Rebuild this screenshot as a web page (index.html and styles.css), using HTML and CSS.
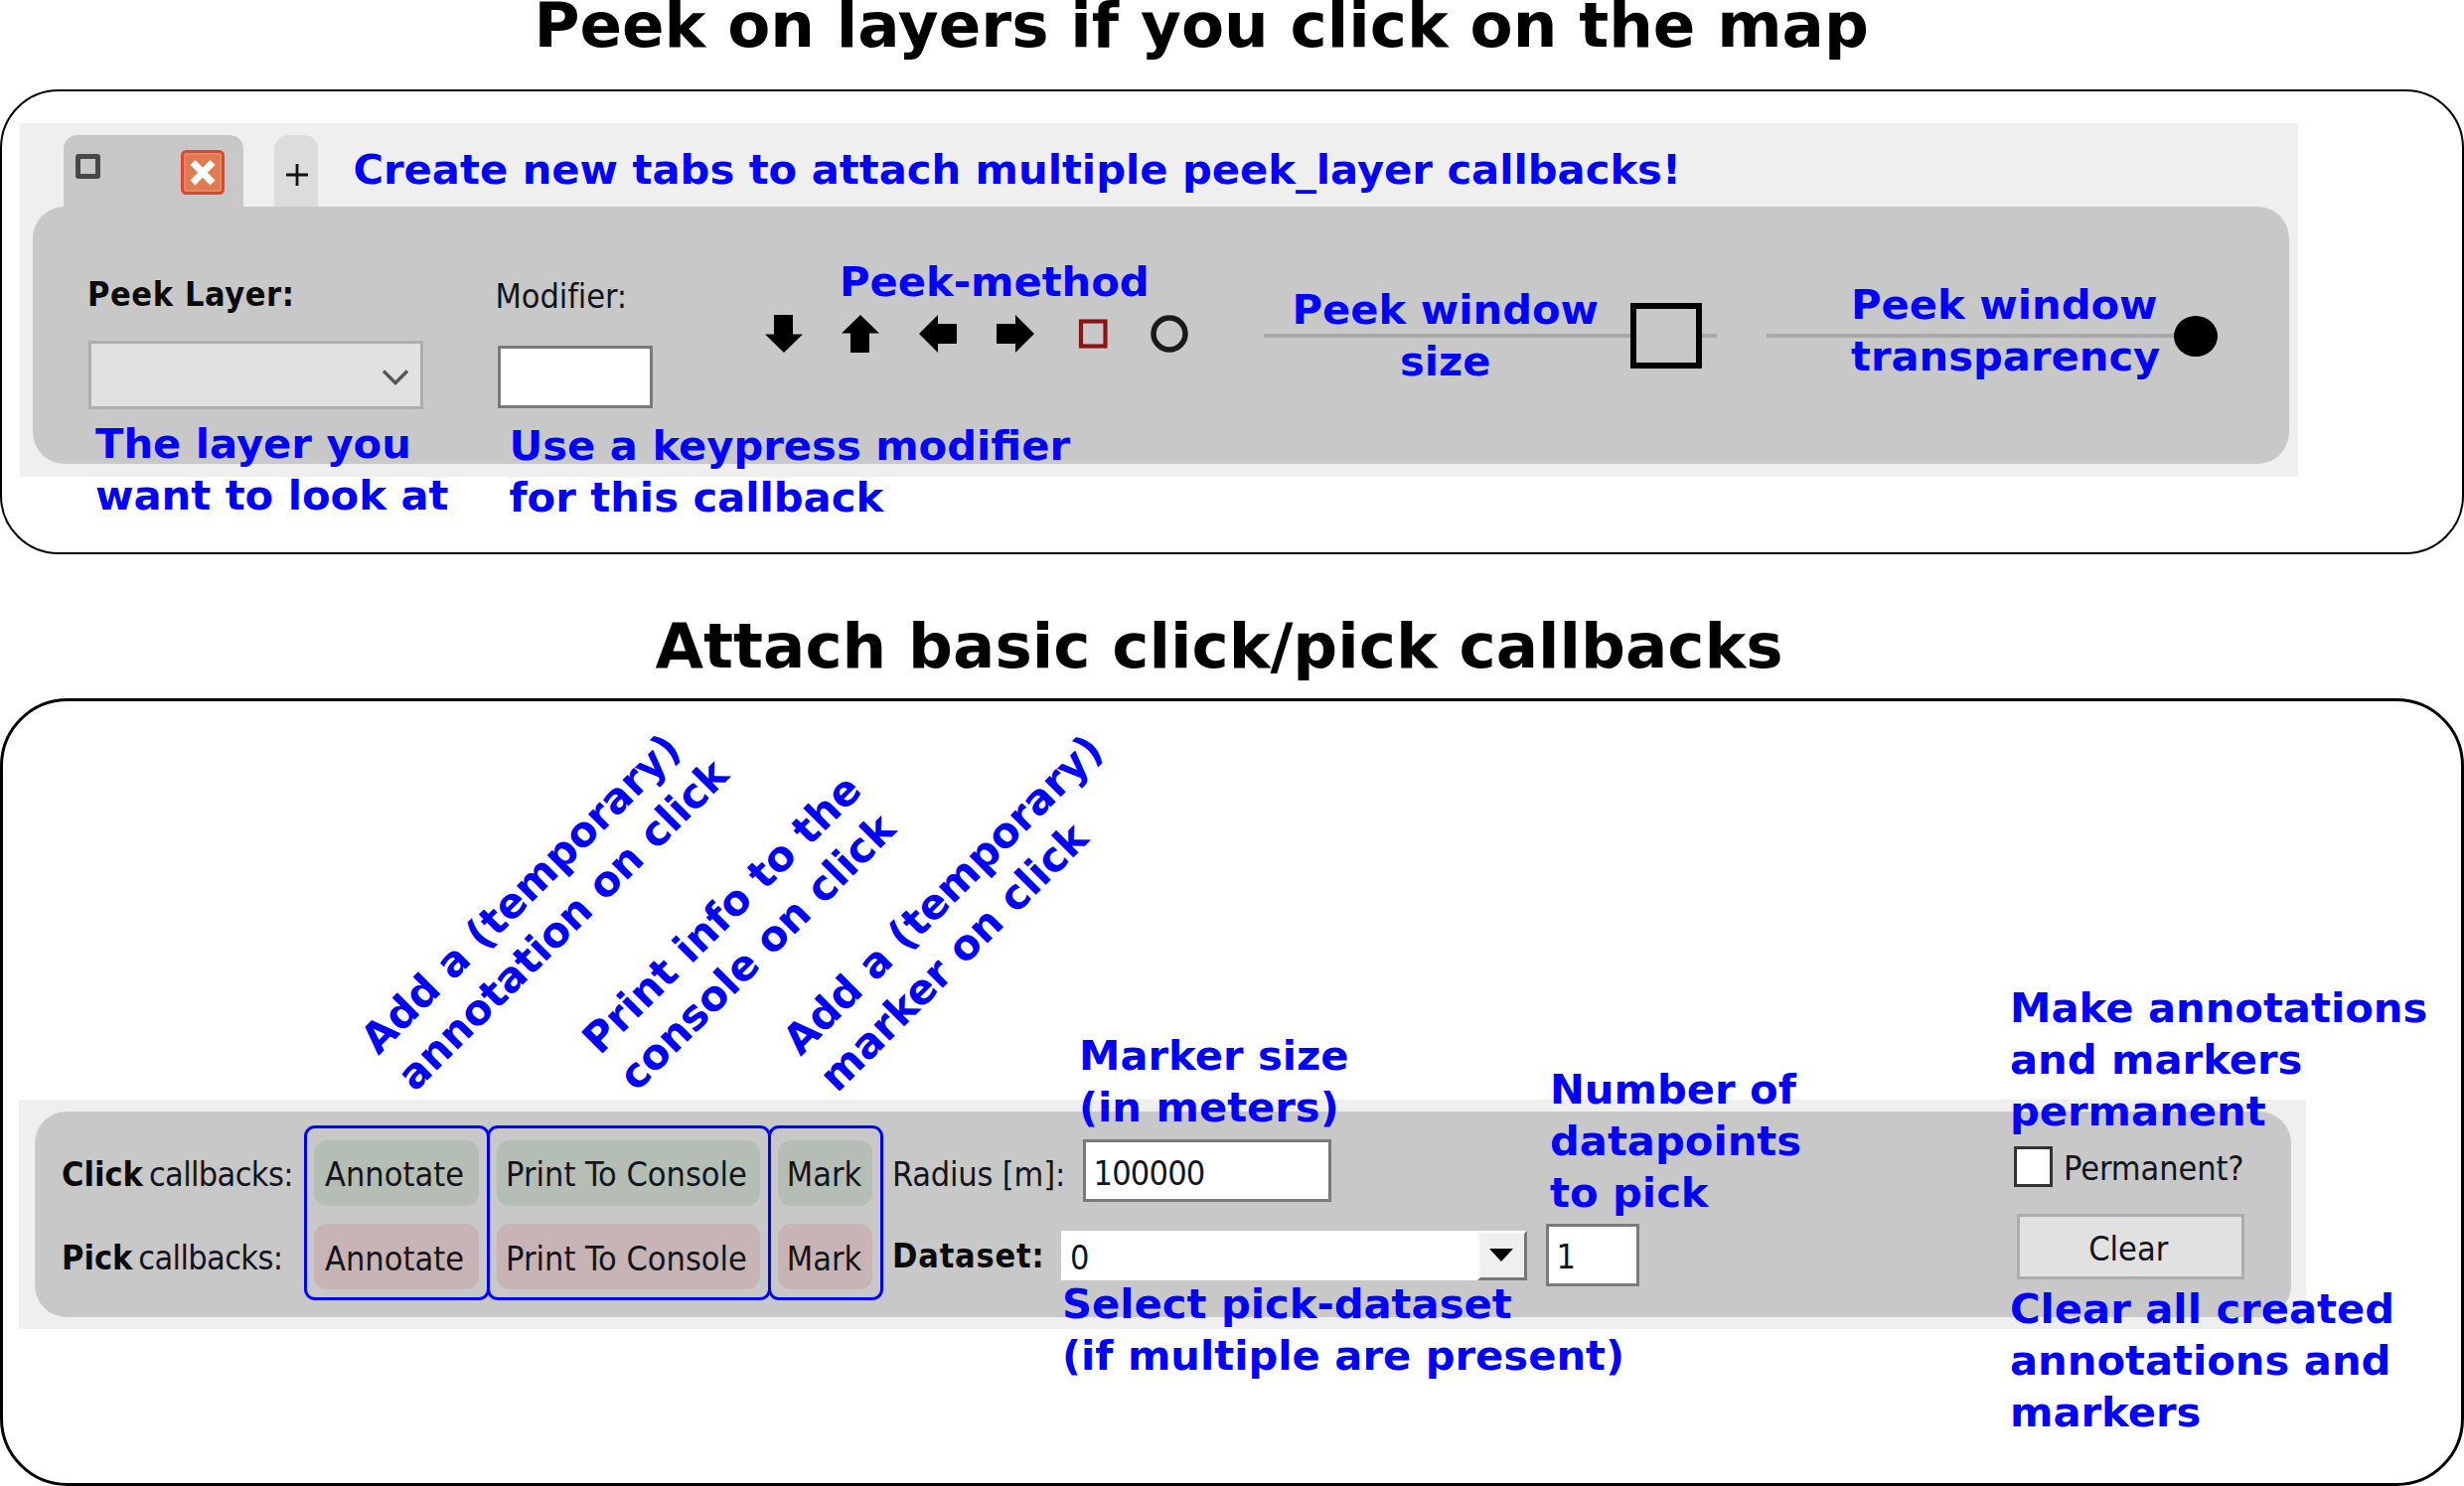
FILE: index.html
```html
<!DOCTYPE html>
<html lang="en">
<head>
<meta charset="utf-8">
<title>Peek and click callbacks</title>
<link rel="stylesheet" href="styles.css">
</head>
<body>
<main class="page">
  <h1 class="title title-peek">Peek on layers if you click on the map</h1>
  <section class="card card-peek">
    <div class="shot shot-peek">
      <div class="tabs">
        <div class="tab">
          <span class="tab-icon"></span>
          <svg class="close" viewBox="0 0 44 45"><rect x="1.5" y="1.5" width="41" height="42" rx="4" fill="#e07a50" stroke="#dc4632" stroke-width="3"/><rect x="4" y="4" width="36" height="37" rx="2" fill="none" stroke="#e88e68" stroke-width="1.5"/><path d="M12 12.500L32 33M32 12.500L12 33" stroke="#fff" stroke-width="7"/></svg>
        </div>
        <div class="tab-add"><svg viewBox="0 0 22 22"><path d="M0 11H22M11 0V22" stroke="#111" stroke-width="2.800"/></svg></div>
      </div>
      <div class="pane pane-peek">
        <div class="field field-layer">
          <b class="peek-label">Peek Layer:</b>
          <div class="combo"><svg viewBox="0 0 28 18"><path d="M2 2.500L14 14.500L26 2.500" fill="none" stroke="#555" stroke-width="3.400"/></svg></div>
        </div>
        <div class="field field-modifier">
          <span class="modifier-label">Modifier:</span>
          <div class="input input-modifier"></div>
        </div>
        <div class="methods">
          <svg viewBox="0 0 38 38"><path d="M9 0H28V19.500H38L19 38L0 19.500H9Z"/></svg>
          <svg viewBox="0 0 38 38"><path d="M9 38H28V18.500H38L19 0L0 18.500H9Z"/></svg>
          <svg viewBox="0 0 38 38"><path d="M38 9V29H19V38L0 19L19 0V9Z"/></svg>
          <svg viewBox="0 0 38 38"><path d="M0 9V29H19V38L38 19L19 0V9Z"/></svg>
          <svg viewBox="0 0 38 38"><rect x="7" y="6.500" width="24.500" height="25" fill="none" stroke="#8c1414" stroke-width="4.200"/></svg>
          <svg viewBox="0 0 38 38"><circle cx="19" cy="19" r="16" fill="none" stroke="#1a1a1a" stroke-width="5.500"/></svg>
        </div>
        <div class="slider slider-size"><span class="rail"></span><span class="handle-square"></span><span class="rail rail-rest"></span></div>
        <div class="slider slider-alpha"><span class="rail"></span><span class="handle-dot"></span></div>
      </div>
    </div>
  </section>

  <h1 class="title title-click">Attach basic click/pick callbacks</h1>
  <section class="card card-click">
    <div class="shot shot-click">
      <div class="pane pane-click">
        <div class="labels">
          <div class="row"><b>Click</b><span>callbacks:</span></div>
          <div class="row"><b>Pick</b><span>callbacks:</span></div>
        </div>
        <div class="group group-annotate"><div class="btn click">Annotate</div><div class="btn pick">Annotate</div></div>
        <div class="group group-print"><div class="btn click">Print To Console</div><div class="btn pick">Print To Console</div></div>
        <div class="group group-mark"><div class="btn click">Mark</div><div class="btn pick">Mark</div></div>
        <div class="params">
          <div class="row"><span class="radius-label">Radius [m]:</span><div class="input input-radius">100000</div></div>
          <div class="row"><b class="dataset-label">Dataset:</b><div class="dataset"><span>0</span><div class="drop"><svg viewBox="0 0 24 13"><path d="M0 0H24L12 13Z"/></svg></div></div><div class="input input-count">1</div></div>
        </div>
        <div class="actions">
          <div class="permanent"><span class="check"></span><span class="permanent-label">Permanent?</span></div>
          <div class="clear">Clear</div>
        </div>
      </div>
    </div>
  </section>

  <p class="note n-tabs">Create new tabs to attach multiple peek_layer callbacks!</p>
  <p class="note n-layer">The layer you<br>want to look at</p>
  <p class="note n-modifier">Use a keypress modifier<br>for this callback</p>
  <p class="note n-method">Peek-method</p>
  <p class="note n-size">Peek window<br>size</p>
  <p class="note n-alpha">Peek window<br>transparency</p>
  <p class="note tilt n-annotate">Add a (temporary)<br>annotation on click</p>
  <p class="note tilt n-print">Print info to the<br>console on click</p>
  <p class="note tilt n-mark">Add a (temporary)<br>marker on click</p>
  <p class="note n-radius">Marker size<br>(in meters)</p>
  <p class="note n-count">Number of<br>datapoints<br>to pick</p>
  <p class="note n-dataset">Select pick-dataset<br>(if multiple are present)</p>
  <p class="note n-permanent">Make annotations<br>and markers<br>permanent</p>
  <p class="note n-clear">Clear all created<br>annotations and<br>markers</p>
</main>
</body>
</html>
```
FILE: styles.css
```css
* { box-sizing: border-box; }
body { margin: 0; background: #fff; }
svg { display: block; flex: none; }
.page {
  position: relative; width: 2480px; height: 1496px;
  display: flex; flex-direction: column;
  font: 34px/40px "DejaVu Sans Condensed", "DejaVu Sans", sans-serif;
  font-stretch: condensed; color: #14141c; white-space: nowrap;
}
.title {
  margin: 0; color: #000; flex: none;
  font: bold 62.75px/52px "DejaVu Sans", sans-serif;
}
.title-peek { height: 90px; padding-left: 537.500px; }
.title-click { height: 145px; padding: 67px 0 0 659.500px; }

.card { flex: none; background: #fff; border: 2px solid #000; }
.card-peek { height: 468px; border-radius: 59px; padding: 32px 0 0 18px; }
.card-click { height: 793px; border-width: 3px; border-radius: 68px; padding: 401px 0 0 15.500px; }
.shot { background: #efefef; }
.shot-peek { width: 2293px; height: 356px; padding: 12px 9px 13px 13px; }
.shot-click { width: 2302.500px; height: 231px; padding: 12px 15.500px 12px 16px; }
.pane { display: flex; background: #c8c8c8; border-radius: 32px; }

/* tab strip */
.tabs { display: flex; height: 72px; padding-left: 31px; gap: 31px; }
.tab {
  width: 181px; padding: 15px 19px 0 12px; background: #c8c8c8;
  border-radius: 14px 14px 0 0; display: flex; justify-content: space-between; align-items: flex-start;
}
.tab-icon { width: 25px; height: 25px; margin-top: 4px; border: 5px solid #484848; border-radius: 3px; }
.close { width: 44px; height: 45px; }
.tab-add { width: 44px; padding: 28.500px 0 0 12px; background: #dcdcdc; border-radius: 14px 14px 0 0; }
.tab-add svg { width: 22px; height: 22px; }

/* peek pane */
.pane-peek { height: 259px; align-items: flex-start; padding-left: 56px; }
.field { display: flex; flex-direction: column; flex: none; }
.field-layer { width: 337px; padding-top: 68px; gap: 26.500px; }
.peek-label { letter-spacing: 0.6px; color: #0a0a0a; margin-left: -1px; }
.combo {
  height: 69px; padding-right: 11px; display: flex; align-items: center; justify-content: flex-end;
  background: #e1e1e1; border: 3px solid #adadad;
}
.combo svg { width: 28px; height: 18px; margin-top: 6px; }
.field-modifier { width: 156px; margin-left: 75px; padding-top: 70px; gap: 30px; }
.modifier-label { margin-left: -2.500px; letter-spacing: -0.1px; }
.input {
  background: #fff; border: 3px solid #7a7a7a; height: 63px; flex: none;
  display: flex; align-items: center; padding: 4px 0 0 8px;
}
.methods { display: flex; gap: 39.800px; margin: 109px 0 0 112.500px; }
.methods svg { width: 38px; height: 38px; }
.slider { display: flex; align-items: center; height: 66px; margin-top: 97px; flex: none; }
.slider-size { width: 456px; margin-left: 76px; }
.slider-alpha { width: 453.500px; margin-left: 50px; }
.rail { flex: 1; height: 4px; background: #a8a8a8; }
.rail-rest { flex: 0 0 15.500px; }
.handle-square { width: 72px; height: 66px; border: 6px solid #000; }
.handle-dot { width: 44px; height: 41px; background: #000; border-radius: 50%; }

/* callbacks pane */
.pane-click { height: 207px; padding-left: 27.500px; align-items: flex-start; }
.labels { width: 243.500px; padding-top: 28px; display: flex; flex-direction: column; gap: 18.500px; }
.row { display: flex; align-items: center; height: 66px; }
.labels .row { padding-top: 3.500px; }
.labels b { color: #0a0a0a; margin-right: 6px; }
.labels span { letter-spacing: -0.65px; }
.group {
  margin-top: 13.500px; height: 176px; border: 3px solid #00f; border-radius: 11px;
  padding: 12px 7.500px 0; display: flex; flex-direction: column; gap: 18.500px; flex: none;
}
.group-annotate { width: 187px; }
.group-print { width: 286px; margin-left: -3px; }
.group-mark { width: 116px; margin-left: -3px; }
.btn { height: 66px; border-radius: 13px; padding: 3.500px 4px 0 0; display: flex; align-items: center; justify-content: center; }
.group-mark .btn { padding-right: 2px; }
.click { background: #b4beb4; }
.pick { background: #c8b4b4; }
.params { padding: 28px 0 0 9.500px; display: flex; flex-direction: column; gap: 18.500px; }
.radius-label { width: 191.500px; padding-top: 3px; letter-spacing: -0.2px; }
.dataset-label { width: 169.500px; padding-bottom: 2px; letter-spacing: 0.8px; color: #0a0a0a; }
.input-radius { width: 250px; margin-top: -3px; letter-spacing: -0.8px; }
.input-count { width: 94px; margin-left: 19px; margin-top: -3px; }
.dataset { width: 469px; height: 50px; margin-top: -2px; background: #fff; display: flex; align-items: center; justify-content: space-between; padding-left: 9.500px; }
.dataset span { padding-top: 5px; }
.drop {
  width: 50px; height: 50px; background: #efefef; border: 3px solid;
  border-color: #f8f8f8 #777 #777 #f8f8f8; display: flex; align-items: center; justify-content: center;
}
.drop svg { width: 24px; height: 13px; margin-right: 2px; }
.actions { margin: 34.500px 47px 0 auto; display: flex; flex-direction: column; gap: 27.500px; width: 231.500px; flex: none; }
.permanent { display: flex; height: 41px; align-items: center; }
.check { width: 41px; height: 41px; background: #fff; border: 3px solid #333; }
.permanent-label { padding-top: 4px; margin-left: 11.500px; letter-spacing: -0.1px; }
.clear {
  height: 66px; margin-left: 3px; padding-top: 3px; background: #e1e1e1; border: 3px solid #adadad;
  display: flex; align-items: center; justify-content: center; padding-right: 4px;
}

/* explanatory notes laid over the panels */
.note {
  position: absolute; margin: 0; color: #00f;
  font: bold 41.670px/52.080px "DejaVu Sans", sans-serif;
}
.n-tabs { left: 355.500px; top: 144.500px; }
.n-layer { left: 96px; top: 420.500px; }
.n-modifier { left: 512.500px; top: 422.500px; }
.n-method { left: 845px; top: 258px; }
.n-size { left: 1300.500px; top: 285.500px; text-align: center; }
.n-alpha { left: 1863px; top: 280.500px; }
.n-radius { left: 1086px; top: 1036.500px; }
.n-count { left: 1560px; top: 1070.500px; }
.n-dataset { left: 1069px; top: 1287px; }
.n-permanent { left: 2023px; top: 989px; }
.n-clear { left: 2023px; top: 1291.500px; }
.tilt { transform: rotate(-45deg); transform-origin: 0 40.460px; }
.n-annotate { left: 380.500px; top: 1023px; }
.n-print { left: 603.800px; top: 1023px; }
.n-mark { left: 806.300px; top: 1024px; }
```
